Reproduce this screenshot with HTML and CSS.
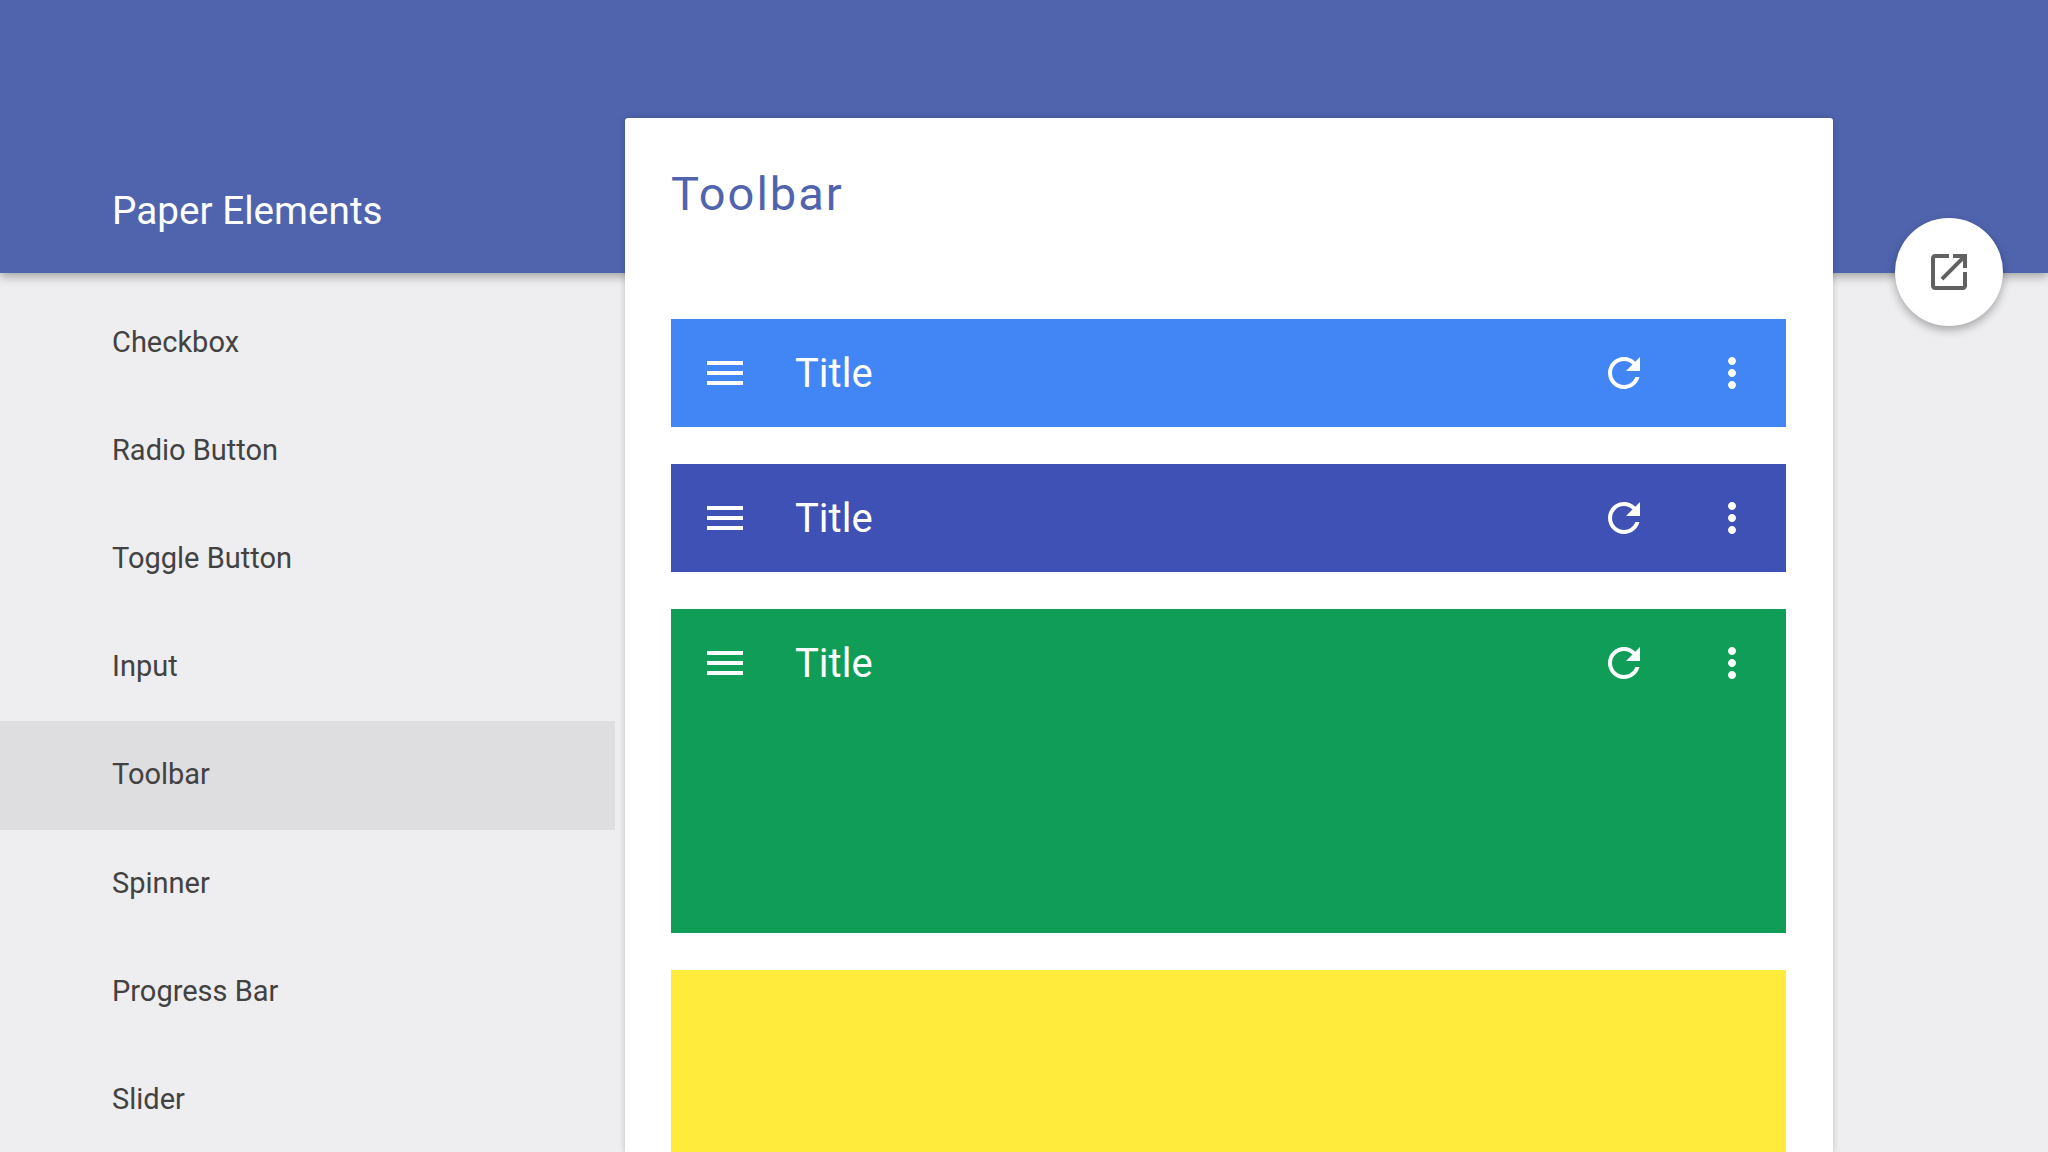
FILE: index.html
```html
<!DOCTYPE html>
<html lang="en">
<head>
  <meta charset="UTF-8">
  <title>Paper Elements</title>
  <link rel="stylesheet" href="styles.css">
</head>
<body>
  <div class="header-band"></div>
  <div class="page">
    <aside class="sidebar">
      <div class="brand">Paper Elements</div>
      <nav class="nav">
        <a class="nav-item">Checkbox</a>
        <a class="nav-item">Radio Button</a>
        <a class="nav-item">Toggle Button</a>
        <a class="nav-item">Input</a>
        <a class="nav-item active">Toolbar</a>
        <a class="nav-item">Spinner</a>
        <a class="nav-item">Progress Bar</a>
        <a class="nav-item">Slider</a>
      </nav>
    </aside>

    <main class="card">
      <h1 class="card-title">Toolbar</h1>

      <div class="toolbar blue">
        <div class="toolbar-row">
          <button class="icon-btn"><svg viewBox="0 0 24 24"><path d="M3 18h18v-2H3v2zm0-5h18v-2H3v2zm0-7v2h18V6H3z"/></svg></button>
          <span class="toolbar-title">Title</span>
          <button class="icon-btn"><svg viewBox="0 0 24 24"><path d="M17.65 6.35C16.2 4.9 14.21 4 12 4c-4.42 0-7.99 3.58-7.99 8s3.57 8 7.99 8c3.73 0 6.84-2.55 7.73-6h-2.08c-.82 2.33-3.04 4-5.65 4-3.31 0-6-2.69-6-6s2.69-6 6-6c1.66 0 3.14.69 4.22 1.78L13 11h7V4l-2.35 2.35z"/></svg></button>
          <button class="icon-btn"><svg viewBox="0 0 24 24"><path d="M12 8c1.1 0 2-.9 2-2s-.9-2-2-2-2 .9-2 2 .9 2 2 2zm0 2c-1.1 0-2 .9-2 2s.9 2 2 2 2-.9 2-2-.9-2-2-2zm0 6c-1.1 0-2 .9-2 2s.9 2 2 2 2-.9 2-2-.9-2-2-2z"/></svg></button>
        </div>
      </div>

      <div class="toolbar indigo">
        <div class="toolbar-row">
          <button class="icon-btn"><svg viewBox="0 0 24 24"><path d="M3 18h18v-2H3v2zm0-5h18v-2H3v2zm0-7v2h18V6H3z"/></svg></button>
          <span class="toolbar-title">Title</span>
          <button class="icon-btn"><svg viewBox="0 0 24 24"><path d="M17.65 6.35C16.2 4.9 14.21 4 12 4c-4.42 0-7.99 3.58-7.99 8s3.57 8 7.99 8c3.73 0 6.84-2.55 7.73-6h-2.08c-.82 2.33-3.04 4-5.65 4-3.31 0-6-2.69-6-6s2.69-6 6-6c1.66 0 3.14.69 4.22 1.78L13 11h7V4l-2.35 2.35z"/></svg></button>
          <button class="icon-btn"><svg viewBox="0 0 24 24"><path d="M12 8c1.1 0 2-.9 2-2s-.9-2-2-2-2 .9-2 2 .9 2 2 2zm0 2c-1.1 0-2 .9-2 2s.9 2 2 2 2-.9 2-2-.9-2-2-2zm0 6c-1.1 0-2 .9-2 2s.9 2 2 2 2-.9 2-2-.9-2-2-2z"/></svg></button>
        </div>
      </div>

      <div class="toolbar green tall">
        <div class="toolbar-row">
          <button class="icon-btn"><svg viewBox="0 0 24 24"><path d="M3 18h18v-2H3v2zm0-5h18v-2H3v2zm0-7v2h18V6H3z"/></svg></button>
          <span class="toolbar-title">Title</span>
          <button class="icon-btn"><svg viewBox="0 0 24 24"><path d="M17.65 6.35C16.2 4.9 14.21 4 12 4c-4.42 0-7.99 3.58-7.99 8s3.57 8 7.99 8c3.73 0 6.84-2.55 7.73-6h-2.08c-.82 2.33-3.04 4-5.65 4-3.31 0-6-2.69-6-6s2.69-6 6-6c1.66 0 3.14.69 4.22 1.78L13 11h7V4l-2.35 2.35z"/></svg></button>
          <button class="icon-btn"><svg viewBox="0 0 24 24"><path d="M12 8c1.1 0 2-.9 2-2s-.9-2-2-2-2 .9-2 2 .9 2 2 2zm0 2c-1.1 0-2 .9-2 2s.9 2 2 2 2-.9 2-2-.9-2-2-2zm0 6c-1.1 0-2 .9-2 2s.9 2 2 2 2-.9 2-2-.9-2-2-2z"/></svg></button>
        </div>
      </div>

      <div class="toolbar yellow tall"></div>
    </main>

    <div class="fab-column">
      <button class="fab"><svg viewBox="0 0 24 24"><path d="M19 19H5V5h7V3H5c-1.11 0-2 .9-2 2v14c0 1.1.89 2 2 2h14c1.1 0 2-.9 2-2v-7h-2v7zM14 3v2h3.59l-9.83 9.83 1.41 1.41L19 6.41V10h2V3h-7z"/></svg></button>
    </div>
  </div>
</body>
</html>
```

FILE: styles.css
```css
html, body {
  height: 100%;
}
body {
  margin: 0;
  height: 100vh;
  overflow: hidden;
  position: relative;
  background: #eeedef;
  font-family: Roboto, sans-serif;
}
.header-band {
  position: absolute;
  top: 0;
  left: 0;
  right: 0;
  height: 273px;
  background: #5064ae;
  box-shadow: 0 3px 10px rgba(0, 0, 0, 0.35);
}
.page {
  position: relative;
  display: flex;
  height: 100%;
}
.sidebar {
  width: 625px;
  flex-shrink: 0;
}
.brand {
  box-sizing: border-box;
  height: 273px;
  padding: 187px 0 0 112px;
  font-size: 38.7px;
  line-height: 48px;
  font-weight: 400;
  color: #fff;
}
.nav {
  display: flex;
  flex-direction: column;
  padding-top: 15.6px;
  margin-right: 10px;
}
.nav-item {
  height: 108.2px;
  line-height: 107.6px;
  padding-left: 112px;
  font-size: 29px;
  color: #424242;
}
.nav-item.active {
  background: #dedde0;
}
.card {
  box-sizing: border-box;
  width: 1208px;
  flex-shrink: 0;
  margin-top: 118px;
  padding: 0 47px 0 46px;
  background: #fff;
  border-radius: 3px 3px 0 0;
  box-shadow: 0 0 6px rgba(0, 0, 0, 0.2);
}
.card-title {
  margin: 0 0 95px;
  padding-top: 46px;
  font-size: 47px;
  line-height: 60px;
  font-weight: 400;
  letter-spacing: 2px;
  color: #5064ae;
}
.toolbar {
  height: 108px;
  margin-bottom: 37px;
  color: #fff;
}
.toolbar.tall {
  height: 324px;
}
.toolbar.blue {
  background: #4285f4;
}
.toolbar.indigo {
  background: #3f51b5;
}
.toolbar.green {
  background: #0f9d58;
}
.toolbar.yellow {
  background: #ffeb3b;
}
.toolbar-row {
  display: flex;
  align-items: center;
  height: 108px;
}
.toolbar-title {
  flex: 1;
  margin-left: 16px;
  font-size: 40px;
}
.icon-btn {
  display: flex;
  align-items: center;
  justify-content: center;
  width: 108px;
  height: 108px;
  padding: 0;
  border: none;
  background: none;
}
.icon-btn svg {
  width: 48px;
  height: 48px;
  fill: #fff;
}
.fab-column {
  padding: 218px 0 0 62px;
}
.fab {
  display: flex;
  align-items: center;
  justify-content: center;
  width: 108px;
  height: 108px;
  padding: 0;
  border: none;
  border-radius: 50%;
  background: #fff;
  box-shadow: 0 4px 10px rgba(0, 0, 0, 0.3);
}
.fab svg {
  width: 48px;
  height: 48px;
  fill: #616161;
}
```
